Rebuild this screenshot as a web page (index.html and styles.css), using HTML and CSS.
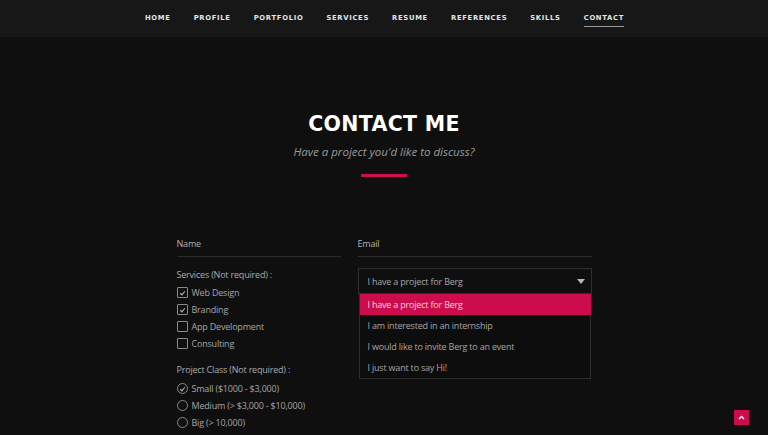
FILE: index.html
```html
<!DOCTYPE html>
<html>
<head>
<meta charset="utf-8">
<link rel="stylesheet" href="styles.css">
</head>
<body>
<nav class="nav">
  <a>Home</a><a>Profile</a><a>Portfolio</a><a>Services</a><a>Resume</a><a>References</a><a>Skills</a><a class="active">Contact</a>
</nav>
<section class="contact">
  <h1 class="title">CONTACT ME</h1>
  <p class="subtitle">Have a project you'd like to discuss?</p>
  <div class="bar"></div>
  <form class="form">
    <div class="col-left">
      <div class="field">Name</div>
      <div class="group-label">Services (Not required) :</div>
      <div class="opt"><span class="box checked"></span>Web Design</div>
      <div class="opt"><span class="box checked"></span>Branding</div>
      <div class="opt"><span class="box"></span>App Development</div>
      <div class="opt"><span class="box"></span>Consulting</div>
      <div class="group-label second">Project Class (Not required) :</div>
      <div class="opt"><span class="radio checked"></span>Small ($1000 - $3,000)</div>
      <div class="opt"><span class="radio"></span>Medium (&gt; $3,000 - $10,000)</div>
      <div class="opt"><span class="radio"></span>Big (&gt; 10,000)</div>
    </div>
    <div class="col-right">
      <div class="field">Email</div>
      <div class="select">
        <span>I have a project for Berg</span><span class="caret"></span>
        <ul class="menu">
          <li class="hl">I have a project for Berg</li>
          <li>I am interested in an internship</li>
          <li>I would like to invite Berg to an event</li>
          <li>I just want to say Hi!</li>
        </ul>
      </div>
    </div>
  </form>
</section>
<a class="top-btn"><svg width="7" height="5" viewBox="0 0 7 5"><path d="M1 4 L3.5 1.5 L6 4" fill="none" stroke="#fff" stroke-width="1.4"/></svg></a>
</body>
</html>
```
FILE: styles.css
```css
* { box-sizing: border-box; }
html, body { margin: 0; padding: 0; }
body {
  background: #0f0f10;
  width: 768px;
  height: 435px;
  overflow: hidden;
  font-family: "Open Sans", sans-serif;
  color: #a9a9a9;
  position: relative;
}
.nav {
  height: 37px;
  background: #171717;
  display: flex;
  justify-content: center;
  align-items: center;
  gap: 23px;
  padding-left: 1px;
}
.nav a {
  font-family: "DejaVu Sans", sans-serif;
  font-weight: bold;
  font-size: 6.8px;
  letter-spacing: 0.7px;
  text-transform: uppercase;
  color: #e4e4e4;
  padding: 2px 0 3px;
  line-height: 10px;
}
.nav a.active { border-bottom: 1px solid #9a9a9a; }
.contact { display: flex; flex-direction: column; align-items: center; }
.title {
  font-family: "DejaVu Sans", sans-serif;
  font-weight: bold;
  font-size: 20.5px;
  color: #fff;
  margin: 75px 0 0;
  line-height: 24px;
  letter-spacing: 0.3px;
}
.subtitle {
  font-style: italic;
  font-size: 11.5px;
  color: #9a9a9a;
  margin: 8px 0 0;
  line-height: 16px;
}
.bar { width: 46px; height: 3px; background: #cf0e4d; margin-top: 14px; }
.form {
  margin-top: 55px;
  display: grid;
  grid-template-columns: 164px 234px;
  gap: 17px;
  font-size: 9px;
  letter-spacing: -0.2px;
}
.field {
  height: 25px;
  border-bottom: 1px solid #2c2c2c;
  line-height: 12px;
  color: #b0b0b0;
  padding-top: 6px;
}
.group-label { margin-top: 11px; line-height: 13px; margin-bottom: 3px; }
.group-label.second { margin-top: 11px; margin-bottom: 4px; }
.opt { display: flex; align-items: center; height: 17px; gap: 4px; color: #a5a5a5; }
.box {
  width: 11px; height: 11px;
  border: 1px solid #8a8a8a;
  border-radius: 1px;
  position: relative;
}
.box.checked::after, .radio.checked::after {
  content: "";
  position: absolute;
  left: 3.2px; top: 1.8px;
  width: 2px; height: 4px;
  border: solid #bbb;
  border-width: 0 1px 1px 0;
  transform: rotate(40deg);
}
.radio {
  width: 11px; height: 11px;
  border: 1px solid #8a8a8a;
  border-radius: 50%;
  position: relative;
}
.col-right { position: relative; }
.select {
  margin-top: 11px;
  height: 26px;
  border: 1px solid #2e2e2e;
  display: flex;
  align-items: center;
  justify-content: space-between;
  padding: 0 6px 0 9px;
  position: relative;
  color: #a5a5a5;
}
.caret {
  width: 0; height: 0;
  border-left: 4px solid transparent;
  border-right: 4px solid transparent;
  border-top: 5px solid #b5b5b5;
}
.menu {
  position: absolute;
  left: 0; right: 0; top: 25px;
  margin: 0; padding: 0;
  list-style: none;
  border: 1px solid #2e2e2e;
  border-top: none;
  background: #0d0d0e;
}
.menu li { height: 21px; line-height: 21px; padding-left: 8px; color: #a5a5a5; }
.menu li.hl { background: #cc0c4c; color: #f2d6df; margin: 0 -1px 0 0; }
.top-btn {
  position: absolute;
  left: 734px; top: 410px;
  width: 15px; height: 15px;
  background: #cc0c4c;
  display: flex; align-items: center; justify-content: center;
}
```
